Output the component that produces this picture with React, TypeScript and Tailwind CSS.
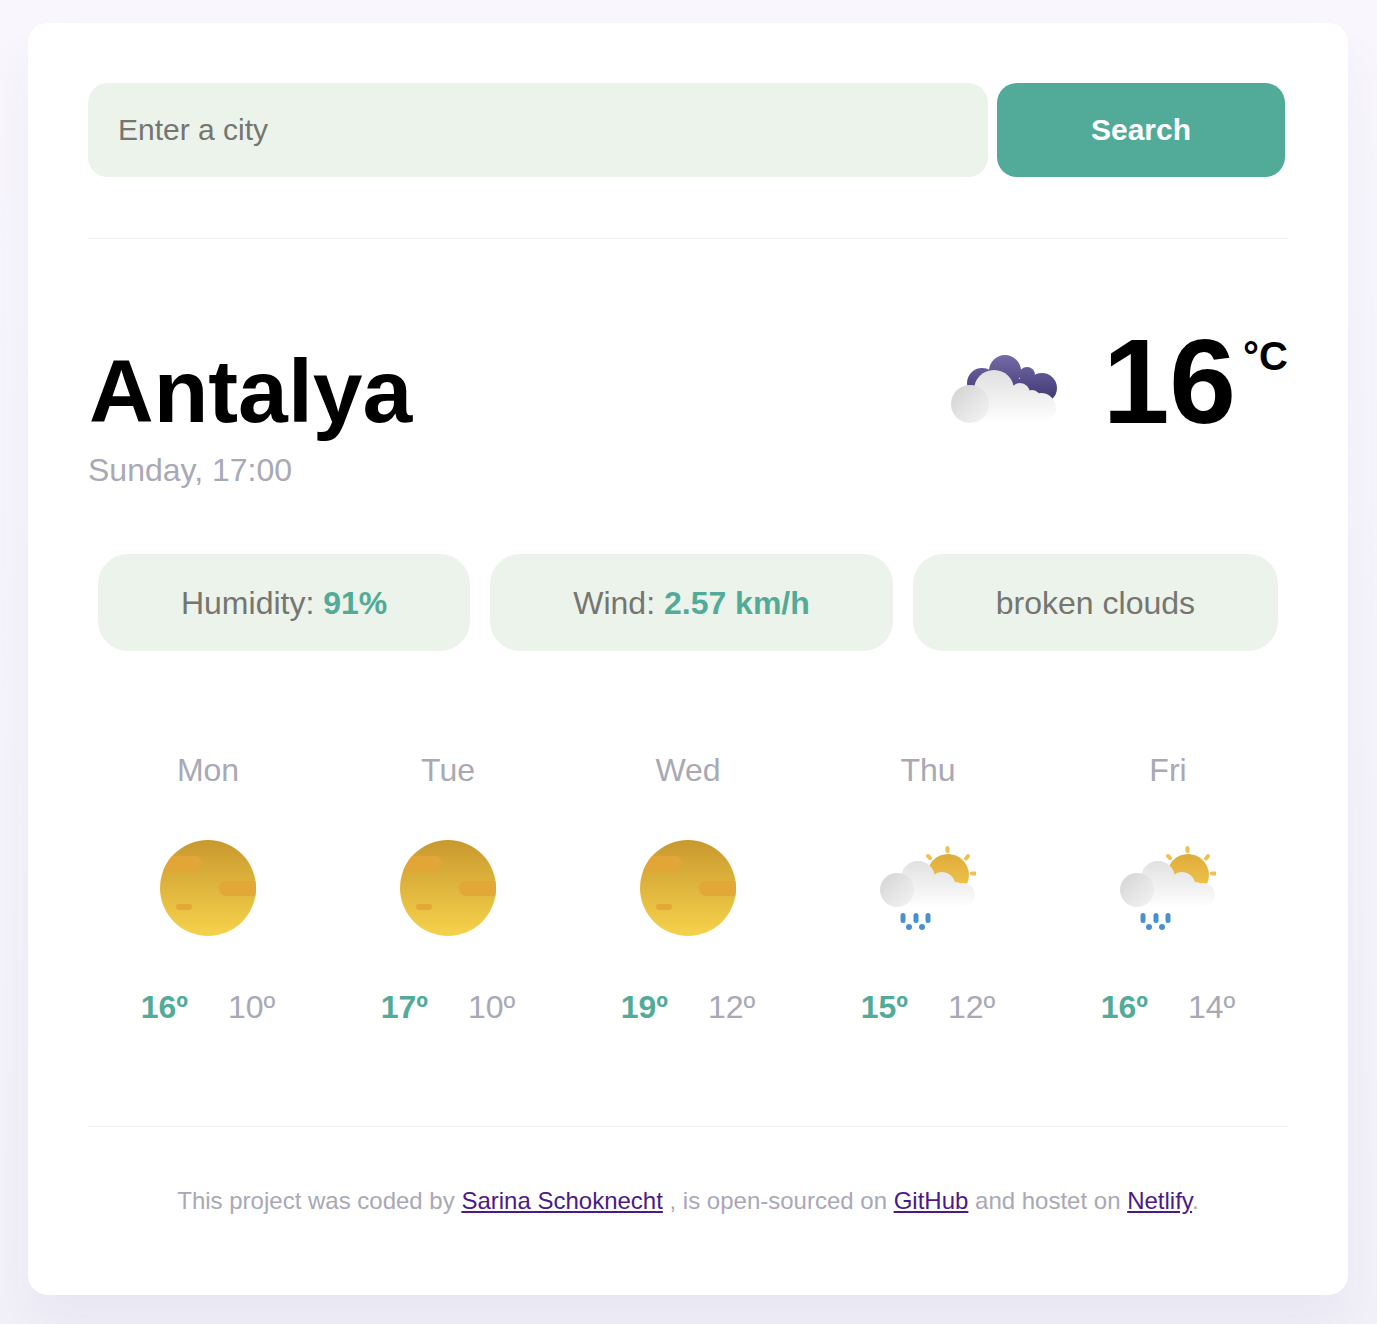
const FORECAST = [
  { day: "Mon", icon: "sun", max: "16", min: "10" },
  { day: "Tue", icon: "sun", max: "17", min: "10" },
  { day: "Wed", icon: "sun", max: "19", min: "12" },
  { day: "Thu", icon: "rain", max: "15", min: "12" },
  { day: "Fri", icon: "rain", max: "16", min: "14" },
]

function SunIcon({ id }: { id: string }) {
  return (
    <svg width="96" height="96" viewBox="0 0 96 96" className="blur-[0.4px]">
      <defs>
        <linearGradient id={`sun-${id}`} x1="0" y1="0" x2="0" y2="1">
          <stop offset="0" stopColor="#c8992f" />
          <stop offset="1" stopColor="#f6d24b" />
        </linearGradient>
        <clipPath id={`clip-${id}`}>
          <circle cx="48" cy="48" r="48" />
        </clipPath>
      </defs>
      <circle cx="48" cy="48" r="48" fill={`url(#sun-${id})`} />
      <g clipPath={`url(#clip-${id})`} fill="#e2a537">
        <rect x="-4" y="16" width="46" height="15" rx="7.5" />
        <rect x="59" y="41" width="46" height="15" rx="7.5" opacity="0.9" />
        <rect x="16" y="64" width="16" height="6" rx="3" opacity="0.9" />
      </g>
    </svg>
  )
}

function RainIcon({ id }: { id: string }) {
  return (
    <svg width="96" height="96" viewBox="0 0 96 96" className="blur-[0.4px]">
      <defs>
        <linearGradient id={`rsun-${id}`} x1="0" y1="0" x2="0" y2="1">
          <stop offset="0" stopColor="#dfab3b" />
          <stop offset="1" stopColor="#f4ca50" />
        </linearGradient>
        <linearGradient id={`rcloud-${id}`} gradientUnits="userSpaceOnUse" x1="0" y1="20" x2="0" y2="68">
          <stop offset="0" stopColor="#e0e0e0" />
          <stop offset="1" stopColor="#ffffff" />
        </linearGradient>
        <linearGradient id={`rball-${id}`} x1="0" y1="0" x2="1" y2="1">
          <stop offset="0" stopColor="#d4d4d4" />
          <stop offset="1" stopColor="#f4f4f4" />
        </linearGradient>
      </defs>
      <circle cx="68" cy="35" r="21" fill={`url(#rsun-${id})`} />
      <g stroke="#f0c050" strokeWidth="4" strokeLinecap="round">
        <path d="M67.500 8v3" />
        <path d="M48 16l2 2" />
        <path d="M88 16l-2 2.500" />
        <path d="M92 33.500h3" />
      </g>
      <g fill={`url(#rcloud-${id})`}>
        <circle cx="38" cy="38" r="17" />
        <circle cx="62" cy="45" r="13" />
        <circle cx="75" cy="54" r="12" />
        <circle cx="83" cy="55" r="12" />
        <rect x="17" y="44" width="66" height="23" />
      </g>
      <circle cx="17" cy="50" r="17" fill={`url(#rball-${id})`} />
      <g fill="#4a90d0">
        <rect x="20.500" y="73" width="5" height="10" rx="2.500" />
        <rect x="33.500" y="73" width="5" height="10" rx="2.500" />
        <rect x="45.500" y="73" width="5" height="10" rx="2.500" />
        <circle cx="29" cy="87" r="3" />
        <circle cx="42" cy="87" r="3" />
      </g>
    </svg>
  )
}

function CloudIcon() {
  return (
    <svg width="120" height="120" viewBox="0 0 120 120" className="blur-[0.4px]">
      <defs>
        <linearGradient id="back" gradientUnits="userSpaceOnUse" x1="0" y1="30" x2="0" y2="80">
          <stop offset="0" stopColor="#7a6eab" />
          <stop offset="1" stopColor="#3d3873" />
        </linearGradient>
        <linearGradient id="front" gradientUnits="userSpaceOnUse" x1="0" y1="50" x2="0" y2="102">
          <stop offset="0" stopColor="#e0e0e0" />
          <stop offset="1" stopColor="#ffffff" />
        </linearGradient>
        <linearGradient id="ball" x1="0" y1="0" x2="1" y2="1">
          <stop offset="0" stopColor="#d2d2d2" />
          <stop offset="1" stopColor="#f5f5f5" />
        </linearGradient>
      </defs>
      <g fill="url(#back)">
        <circle cx="60" cy="50" r="16" />
        <circle cx="37" cy="62" r="15" />
        <circle cx="82" cy="54" r="8" />
        <circle cx="97" cy="67" r="15" />
        <rect x="35" y="58" width="62" height="22" />
      </g>
      <g fill="url(#front)">
        <circle cx="49" cy="69" r="20" />
        <circle cx="75" cy="72" r="10" />
        <circle cx="87" cy="77" r="8" />
        <circle cx="96" cy="87" r="15" />
        <rect x="25" y="74" width="72" height="28" />
      </g>
      <circle cx="25" cy="83" r="19" fill="url(#ball)" />
    </svg>
  )
}

export default function App() {
  return (
    <div className="min-h-[1324px] bg-[linear-gradient(180deg,#f9f7fd_0%,#f2f0f9_100%)] pt-[23px] pb-[29px] font-['Liberation_Sans',sans-serif]">
      <div className="ml-[28px] w-[1320px] h-[1272px] rounded-[20px] bg-white px-[60px] pt-[60px] shadow-[0_30px_50px_rgba(65,50,100,0.05)]">
        <form className="flex h-[94px] gap-[9px] w-[1197px]">
          <input
            type="text"
            placeholder="Enter a city"
            className="w-[900px] rounded-[20px] bg-[#ebf3ea] px-[30px] pb-[2px] text-[30px] text-[#757571] placeholder:text-[#757571] outline-none"
          />
          <button type="button" className="w-[288px] rounded-[20px] bg-[#52ab98] pb-[2px] text-[30px] font-bold text-white">
            Search
          </button>
        </form>
        <hr className="mt-[61px] border-t border-[#f3f3f3]" />

        <div className="mt-[82px] flex items-start justify-between">
          <div className="mt-[20px]">
            <h1 className="pl-[1px] text-[89.5px] leading-[100px] font-bold text-black">Antalya</h1>
            <div className="mt-[9px] text-[32px] leading-[40px] text-[#a9a8b5]">Sunday, 17:00</div>
          </div>
          <div className="flex items-start">
            <CloudIcon />
            <span className="ml-[38px] text-[120px] leading-[120px] font-bold text-black">16</span>
            <span className="ml-[7px] mt-[12px] text-[40px] leading-[46px] font-bold text-black">°C</span>
          </div>
        </div>

        <div className="mt-[64px] flex justify-center gap-[20px] text-[32px] text-[#757571]">
          <div className="rounded-[30px] bg-[#ebf3ea] px-[83px] pt-[31px] pb-[29px] leading-[37px]">
            Humidity: <strong className="text-[#52ab98]">91%</strong>
          </div>
          <div className="rounded-[30px] bg-[#ebf3ea] px-[83px] pt-[31px] pb-[29px] leading-[37px]">
            Wind: <strong className="text-[#52ab98]">2.57 km/h</strong>
          </div>
          <div className="rounded-[30px] bg-[#ebf3ea] px-[83px] pt-[31px] pb-[29px] leading-[37px]">broken clouds</div>
        </div>

        <div className="mt-[101px] grid grid-cols-5 text-[32px]">
          {FORECAST.map((f) => (
            <div key={f.day} className="flex flex-col items-center">
              <div className="leading-[37px] text-[#a9a8b5]">{f.day}</div>
              <div className="mt-[51px] h-[96px]">
                {f.icon === "sun" ? <SunIcon id={f.day} /> : <RainIcon id={f.day} />}
              </div>
              <div className="mt-[53px] flex gap-[40px] leading-[37px]">
                <strong className="text-[#52ab98]">{f.max}º</strong>
                <span className="text-[#a9a8b5]">{f.min}º</span>
              </div>
            </div>
          ))}
        </div>

        <hr className="mt-[100px] border-t border-[#f3f3f3]" />
        <p className="mt-[60px] text-center text-[24px] leading-[28px] text-[#a9a8b5]">
          This project was coded by <a href="#" className="text-[#4b1a89] underline">Sarina Schoknecht</a> , is open-sourced on{" "}
          <a href="#" className="text-[#4b1a89] underline">GitHub</a> and hostet on{" "}
          <a href="#" className="text-[#4b1a89] underline">Netlify</a>.
        </p>
      </div>
    </div>
  )
}
